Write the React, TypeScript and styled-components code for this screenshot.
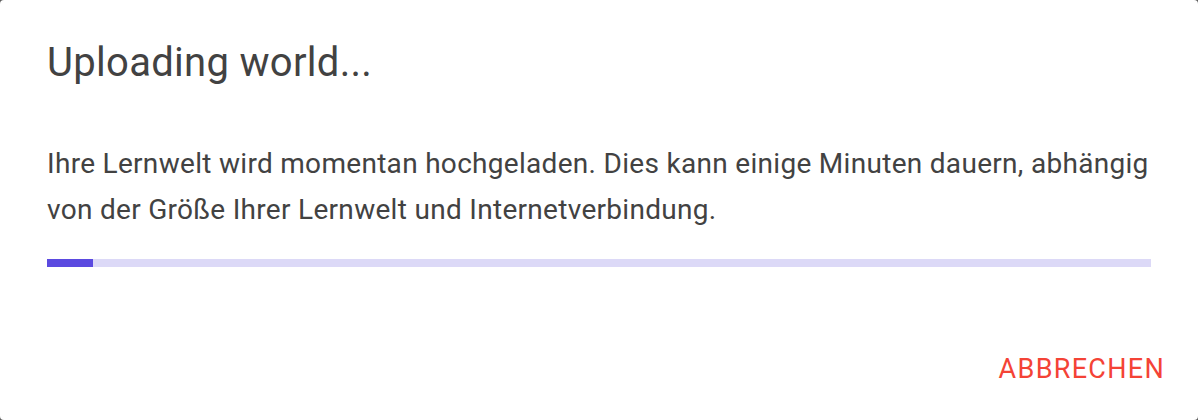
import React from "react";
import styled, { createGlobalStyle } from "styled-components";

const GlobalStyle = createGlobalStyle`
  html, body {
    margin: 0;
    padding: 0;
    background: #5c5c5c;
  }
  * {
    box-sizing: border-box;
  }
`;

const App = () => {
  const progress = 4.2;

  return (
    <>
      <GlobalStyle />
      <Dialog>
        <Title>Uploading world...</Title>
        <Content>
          <Message>
            Ihre Lernwelt wird momentan hochgeladen. Dies kann einige Minuten
            dauern, abhängig von der Größe Ihrer Lernwelt und
            Internetverbindung.
          </Message>
          <Track>
            <Bar style={{ width: `${progress}%` }} />
          </Track>
        </Content>
        <Actions>
          <TextButton>Abbrechen</TextButton>
        </Actions>
      </Dialog>
    </>
  );
};

export default App;

const Dialog = styled.div`
  width: 1198px;
  height: 420px;
  background: #ffffff;
  border-radius: 4px;
  display: flex;
  flex-direction: column;
  font-family: Roboto, "Liberation Sans", sans-serif;
  color: #424242;
  overflow: hidden;
`;

const Title = styled.h2`
  margin: 0;
  padding: 38px 47px 0;
  font-size: 40px;
  letter-spacing: 0.3px;
  font-weight: 400;
  line-height: 50px;
`;

const Content = styled.div`
  padding: 53px 47px 0 47px;
  display: flex;
  flex-direction: column;
`;

const Message = styled.p`
  margin: 0;
  font-size: 28px;
  letter-spacing: 0.3px;
  line-height: 46px;
`;

const Track = styled.div`
  margin-top: 26px;
  height: 8px;
  width: 1104px;
  background: #dcd9f7;
`;

const Bar = styled.div`
  height: 100%;
  background: #5b4ae0;
`;

const Actions = styled.div`
  margin-top: auto;
  padding: 0 33px 27px;
  display: flex;
  justify-content: flex-end;
`;

const TextButton = styled.button`
  border: none;
  background: transparent;
  padding: 8px 0;
  font-family: inherit;
  font-size: 27px;
  letter-spacing: 1.3px;
  text-transform: uppercase;
  color: #f44336;
  cursor: pointer;
`;
